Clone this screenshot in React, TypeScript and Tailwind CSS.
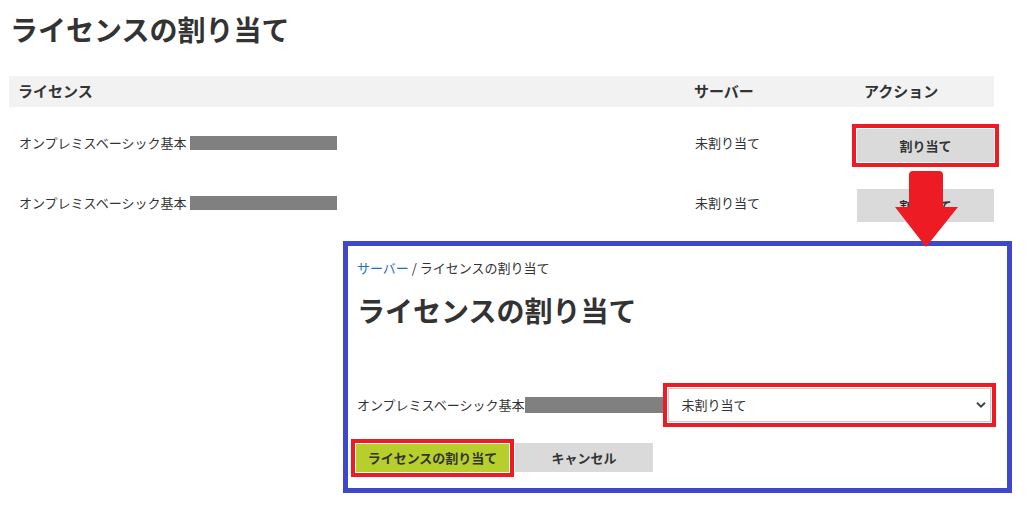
import React from 'react';

const FONT = '"Noto Sans CJK JP", "Noto Sans", sans-serif';

const rows = [
  { name: 'オンプレミスベーシック基本', server: '未割り当て', highlight: true },
  { name: 'オンプレミスベーシック基本', server: '未割り当て', highlight: false },
];

const RedFrame: React.FC = () => (
  <span className="pointer-events-none absolute -inset-[5px] border-4 border-[#ed1c24]" />
);

const ChevronDown: React.FC = () => (
  <svg width="10" height="7" viewBox="0 0 10 7" className="absolute right-[5px] top-1/2 -translate-y-1/2">
    <path d="M1 1.2 L5 5.2 L9 1.2" fill="none" stroke="#444" strokeWidth="2" />
  </svg>
);

const DownArrow: React.FC = () => (
  <svg width="63" height="76" viewBox="0 0 63 76" className="absolute left-[895px] top-[171px] z-10">
    <path d="M14 36 L14 4 Q14 0 18 0 L44 0 Q48 0 48 4 L48 36 L63 36 L31 76 L0 36 Z" fill="#ed1c24" />
  </svg>
);

export default function App() {
  return (
    <div
      className="relative w-[1029px] h-[507px] overflow-hidden bg-white text-[#333]"
      style={{ fontFamily: FONT }}
    >
      <h1 className="ml-[10px] mt-[9px] text-[28px] leading-[40px] font-bold">ライセンスの割り当て</h1>

      {/* license table */}
      <div className="ml-[9px] mt-[27px] w-[985px]">
        <div className="grid grid-cols-[677px_171px_137px] h-[31px] items-center bg-[#f2f2f2] text-[15px] font-bold">
          <div className="pl-[9px]">ライセンス</div>
          <div className="pl-[8px]">サーバー</div>
          <div className="pl-[7px]">アクション</div>
        </div>
        {rows.map((r, i) => (
          <div key={i} className="grid grid-cols-[677px_171px_137px] h-[60px] pt-[22px] items-start text-[13px]">
            <div className="pl-[10px] mt-[4px] leading-[20px] flex items-center">
              <span>{r.name}</span>
              <span className="ml-[4px] inline-block w-[147px] h-[14px] bg-[#808080]" />
            </div>
            <div className="pl-[9px] mt-[4px] leading-[20px]">{r.server}</div>
            <div className="relative h-[33px]">
              <button className="w-full h-full bg-[#dadada] text-[13px] font-bold text-[#333]">割り当て</button>
              {r.highlight && <RedFrame />}
            </div>
          </div>
        ))}
      </div>

      <DownArrow />

      {/* assign dialog */}
      <div className="ml-[343px] mt-[14px] w-[669px] h-[252px] border-[5px] border-[#3f48cc] pl-[9px] pt-[12px]">
        <div className="text-[13px] leading-[20px]">
          <span className="text-[#1f6fc5]">サーバー</span>
          <span> / ライセンスの割り当て</span>
        </div>
        <h2 className="mt-[12px] text-[28px] leading-[40px] font-bold">ライセンスの割り当て</h2>

        <div className="mt-[58px] flex items-center h-[34px] text-[13px]">
          <span>オンプレミスベーシック基本</span>
          <span className="ml-[1px] inline-block w-[138px] h-[16px] bg-[#808080]" />
          <div className="relative ml-[5px] w-[323px] h-[34px]">
            <div className="h-full border border-[#ccc] bg-white pl-[12px] flex items-center text-[13px]">未割り当て</div>
            <ChevronDown />
            <RedFrame />
          </div>
        </div>

        <div className="mt-[21px] flex items-center">
          <div className="relative -ml-[1px] w-[153px] h-[28px]">
            <button className="w-full h-full bg-[#b6cf2d] text-[13px] font-bold text-[#333]">ライセンスの割り当て</button>
            <RedFrame />
          </div>
          <button className="ml-[6px] w-[138px] h-[29px] bg-[#dadada] text-[13px] font-bold text-[#333]">キャンセル</button>
        </div>
      </div>
    </div>
  );
}
